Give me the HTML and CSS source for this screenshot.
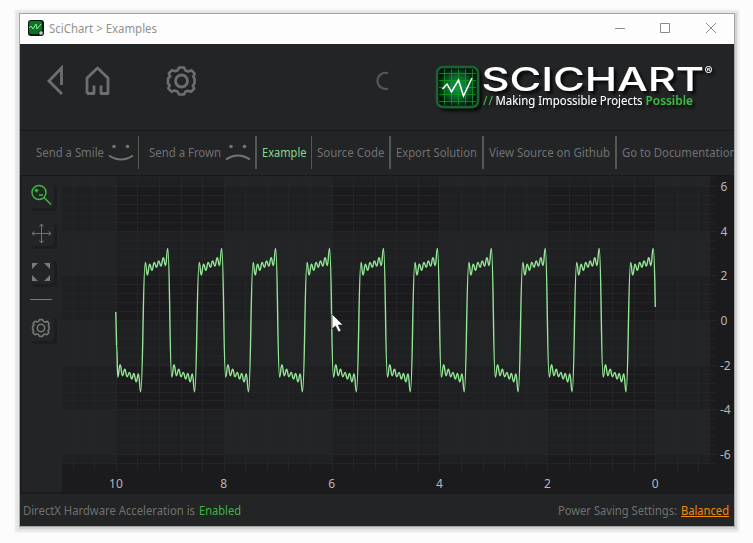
FILE: index.html
```html
<!DOCTYPE html>
<html lang="en">
<head>
<meta charset="utf-8">
<title>SciChart &gt; Examples</title>
<link rel="stylesheet" href="styles.css">
</head>
<body>
<div class="window">
  <div class="titlebar">
    <svg class="app-icon" width="16" height="16" viewBox="0 0 16 16">
      <rect width="16" height="16" rx="3" fill="#071b0d"/>
      <rect x="1" y="1" width="13" height="13" rx="2" fill="#087526"/>
      <path d="M1 8l2-2 2 3 3-5 1 5 4-5" fill="none" stroke="#9ce6a5"/>
      <circle cx="13" cy="13" r="2.3" fill="#ccc" stroke="#222"/>
    </svg>
    <svg class="title" width="112" height="18"><text x="0" y="13" textLength="108" lengthAdjust="spacingAndGlyphs">SciChart &gt; Examples</text></svg>
    <svg class="controls" width="110" height="16" viewBox="0 0 110 16">
      <path d="M0 8.500h10M45.500 3.500h9v9h-9zM91 3l10 10M101 3l-10 10" fill="none" stroke="#8a8a8a"/>
    </svg>
  </div>

  <header class="header">
    <svg class="nav" width="160" height="34" viewBox="0 0 160 34">
      <g fill="none" stroke="#6d6f6f" stroke-width="2.800">
        <path d="M15 31L2 18 14.500 5v17"/>
        <path d="M40 30.500V15L50.500 5 61 15v15.500h-7v-8M47 22.500v8h-7" stroke-linejoin="round"/>
        <g transform="translate(134.500 18)">
          <path id="gear" stroke-width="2.600" stroke-linejoin="round" d="M-2.500-13.500h5l1.500 3 3 1 3-1.200 3.200 3.400-1.400 3.100L13-2.500v5l-1.700 2 1.400 3L9.500 10.800l-3.200-1-2.500 1L2.500 13.500h-5l-1.500-3-3-1-3 1.200-3.200-3.400 1.400-3.100L-13.500 2.500v-5l2.200-2-1.400-3 3.200-3.300 3.200 1 2.500-1z"/>
          <circle r="6"/>
        </g>
      </g>
    </svg>
    <svg class="spinner" width="14" height="20" viewBox="0 0 14 20"><path d="M12 2.300A8 8 0 1 0 12 17.500" fill="none" stroke="#565959" stroke-width="2"/></svg>
    <svg class="logo" width="288" height="60" viewBox="432 60 288 60">
      <defs>
        <radialGradient id="glow"><stop stop-color="#16a04c"/><stop offset=".55" stop-color="#0a652c"/><stop offset="1" stop-color="#021408"/></radialGradient>
        <filter id="shade" x="-10%" y="-20%" width="125%" height="150%"><feDropShadow dx="3" dy="3" stdDeviation="1.500" flood-color="#000" flood-opacity=".75"/></filter>
      </defs>
      <g filter="url(#shade)">
        <rect x="437" y="67" width="41" height="40" rx="6" fill="url(#glow)" stroke="#1b6236" stroke-width="2.500"/>
        <path d="M444.500 69v36M451.500 69v36M458.500 69v36M465.500 69v36M472.500 69v36M439 73.500h37M439 80.500h37M439 87.500h37M439 94.500h37M439 101.500h37" stroke="#0a9b20" stroke-width=".8"/>
        <path d="M442.500 89l4.500-5 4.500 8 7-12 5 16 8.500-18" fill="none" stroke="#fff" stroke-width="1.500"/>
        <text class="brand" x="481.500" y="90.700" textLength="222.500" lengthAdjust="spacingAndGlyphs">SCICHART</text>
        <text class="reg" x="704.500" y="75">®</text>
        <text class="tag slashes" x="483" y="105" textLength="10">//</text>
        <text class="tag" x="495.500" y="105" textLength="147" lengthAdjust="spacingAndGlyphs">Making Impossible Projects</text>
        <text class="tag possible" x="645.500" y="105" textLength="47.500" lengthAdjust="spacingAndGlyphs">Possible</text>
      </g>
    </svg>
  </header>

  <nav class="tabs">
    <div class="tab smile"><svg width="69" height="20"><text x="0" y="13" textLength="68" lengthAdjust="spacingAndGlyphs">Send a Smile</text></svg>
      <svg class="face" width="26" height="18" viewBox="0 0 26 18"><circle cx="6" cy="2.500" r="1.800"/><circle cx="19.500" cy="2.500" r="1.800"/><path d="M1 11.500q12 8 24 0"/></svg></div>
    <div class="tab frown"><svg width="73" height="20"><text x="0" y="13" textLength="72" lengthAdjust="spacingAndGlyphs">Send a Frown</text></svg>
      <svg class="face" width="26" height="18" viewBox="0 0 26 18"><circle cx="6" cy="2.500" r="1.800"/><circle cx="19.500" cy="2.500" r="1.800"/><path d="M1 15.500q12-8 24 0"/></svg></div>
    <div class="tab example"><svg width="46" height="20"><text x="0" y="13" textLength="44.500" lengthAdjust="spacingAndGlyphs">Example</text></svg></div>
    <div class="tab source"><svg width="69" height="20"><text x="0" y="13" textLength="67.500" lengthAdjust="spacingAndGlyphs">Source Code</text></svg></div>
    <div class="tab export"><svg width="82" height="20"><text x="0" y="13" textLength="81" lengthAdjust="spacingAndGlyphs">Export Solution</text></svg></div>
    <div class="tab github"><svg width="122" height="20"><text x="0" y="13" textLength="121" lengthAdjust="spacingAndGlyphs">View Source on Github</text></svg></div>
    <div class="tab docs"><svg width="120" height="20"><text x="0" y="13" textLength="114.500" lengthAdjust="spacingAndGlyphs">Go to Documentation</text></svg></div>
  </nav>

  <main class="main">
    <aside class="tools">
      <div class="tool"><svg width="24" height="24" viewBox="0 0 24 24" fill="none" stroke="#3fb544" stroke-width="1.500"><circle cx="9" cy="8.500" r="7"/><path d="M14 13.500l7 7M4.500 6.500h4M6.500 4.500v4M9 11h4"/></svg></div>
      <div class="tool"><svg width="24" height="24" viewBox="0 0 24 24" fill="none" stroke="#707270"><path d="M2 11.500h19M11.500 2v19M9.500 4.500l2-2.500 2 2.500M9.500 18.500l2 2.500 2-2.500M4.500 9.500L2 11.500l2.500 2M18.500 9.500l2.500 2-2.500 2"/></svg></div>
      <div class="tool"><svg width="24" height="24" viewBox="0 0 24 24" fill="#7a7c7a"><path d="M2 3h6L2 9zM20 3v6l-6-6zM2 21v-6l6 6zM20 21h-6l6-6z"/></svg></div>
      <div class="rule"></div>
      <div class="tool"><svg width="24" height="24" viewBox="0 0 24 24" fill="none" stroke="#747774"><g transform="translate(11 11)"><use href="#gear" transform="scale(.62)"/><circle r="3.700" stroke-width="1.500"/></g></svg></div>
    </aside>
    <svg id="chart" class="chart" width="672" height="317" viewBox="62 176 672 317"></svg>
  </main>

  <footer class="footer">
    <svg width="220" height="20"><text x="0" y="14" textLength="172" lengthAdjust="spacingAndGlyphs">DirectX Hardware Acceleration is</text><text class="enabled" x="176" y="14" textLength="42" lengthAdjust="spacingAndGlyphs">Enabled</text></svg>
    <svg width="172" height="20"><text x="0" y="14" textLength="119" lengthAdjust="spacingAndGlyphs">Power Saving Settings:</text><text class="balanced" x="123" y="14" textLength="48" lengthAdjust="spacingAndGlyphs">Balanced</text><path d="M123 15.500h48" stroke="#f58a07"/></svg>
  </footer>
</div>
<svg class="cursor" width="14" height="21" viewBox="0 0 14 21"><path d="M1 1v15l3.500-3 3 6 2.500-1.200-2.700-5.800H12z" fill="#fff" stroke="#222" stroke-width=".7"/></svg>
<script src="chart.js"></script>
</body>
</html>
```
FILE: styles.css
```css
* { box-sizing: border-box; }
body {
  margin: 0;
  width: 753px;
  height: 543px;
  overflow: hidden;
  background: #fcfcfc;
  padding: 13px 0 0 19px;
  font: 12px "Noto Sans", "Open Sans", sans-serif;
}
svg { display: block; flex: none; overflow: visible; }
text { fill: #6f7171; font-size: 12px; }
.window {
  width: 716px;
  height: 514px;
  border: 1px solid #a5a5a5;
  background: #1b1b1d;
  box-shadow: 1px 1px 0 1px #d2d2d2, 0 1px 2px 4px #e6e6e6;
}
.titlebar {
  height: 30px;
  background: #fdfdfd;
  display: flex;
  align-items: center;
  padding-left: 8px;
}
.app-icon { margin-top: -2px; }
.title { margin-left: 5px; }
.title text { fill: #929292; }
.controls { margin-left: 454px; margin-top: -2px; }
.header {
  height: 86px;
  background: #232426;
  display: flex;
}
.nav { margin: 18.500px 0 0 27px; }
.spinner { margin: 27px 0 0 169px; }
.logo { margin: 16px 0 0 42px; }
.brand { font-family: Inter, sans-serif; font-weight: 500; font-size: 32.600px; fill: #fff; }
.reg { font-family: Inter, sans-serif; font-size: 12px; fill: #fff; }
.tag { font-size: 12px; fill: #fff; }
.slashes { fill: #3db845; }
.possible { font-weight: 600; fill: #3db845; }
.tabs {
  height: 46px;
  border-top: 1px solid #18191a;
  border-bottom: 1px solid #18191a;
  background: #232426;
  display: flex;
  padding-top: 5px;
  overflow: hidden;
}
.tab {
  height: 33px;
  display: flex;
  align-items: center;
  flex: none;
  border-right: 2px solid #515a53;
}
.tab > svg:first-child { margin-top: 2px; }
.smile { width: 119px; padding-left: 16px; border-right-width: 1px; }
.frown { width: 118px; padding-left: 10px; }
.example { width: 55px; padding-left: 5px; border-right-width: 1px; }
.source { width: 79px; padding-left: 5px; }
.export { width: 93px; padding-left: 5px; }
.github { width: 133px; padding-left: 5px; }
.docs { width: 117px; padding-left: 5px; border: 0; overflow: hidden; }
.example text { fill: #85d889; }
.face { margin-left: 3px; fill: #737573; }
.face path { fill: none; stroke: #737573; stroke-width: 2; }
.main { height: 318px; display: flex; padding-left: 2px; }
.tools {
  width: 40px;
  height: 316px;
  background: #232426;
  padding: 8px 0 0 8px;
}
.tool {
  width: 24px;
  height: 24px;
  margin-bottom: 14px;
  border-radius: 3px;
  box-shadow: 2px 2px 0 1px #1c1d1e;
  background: #232426;
}
.tools .tool:nth-child(3) { margin-bottom: 15px; }
.rule { width: 22px; height: 1px; background: #777a77; margin: 0 0 17px; }
.chart text { fill: #b7b7b7; }
.footer {
  height: 32px;
  background: #232426;
  display: flex;
  justify-content: space-between;
  padding: 7px 4px 0 3px;
}
.footer .enabled { fill: #3fb544; }
.footer .balanced { fill: #f58a07; }
.cursor { position: absolute; left: 330.500px; top: 313px; }
```
FILE: chart.js
```js
const parts = [];
const rect = (x, y, w, h, fill) => parts.push(`<rect x="${x}" y="${y}" width="${w}" height="${h}" fill="${fill}"/>`);
const yPos = v => 320 - v * 22.35;
const xPos = v => 655.2 - v * 53.93;

// plot background and alternating bands
rect(62, 176, 648, 288, '#232426');
for (const v of [6, 2, -2]) rect(62, Math.round(yPos(v)), 648, 45, '#1f2022');
rect(62, 454, 648, 10, '#1f2022');
for (const v of [10, 6, 2]) {
  const x = Math.round(xPos(v));
  rect(x, 176, 108, 288, '#1f2022');
  for (const w of [6, 2, -2]) rect(x, Math.round(yPos(w)), 108, 45, '#1b1b1d');
  rect(x, 454, 108, 10, '#1b1b1d');
}

// gridlines run on into the axes as tick marks
for (let i = -2; i <= 27; i++) {
  const x = Math.round(xPos(i * 0.4));
  if (x > 62 && x < 710) rect(x, 176, 1, i % 5 === 0 ? 296 : 294, '#242527');
}
for (let i = -16; i <= 16; i++) {
  const y = Math.round(yPos(i * 0.4));
  if (y > 176 && y < 465) rect(62, y, i % 5 === 0 ? 655 : 653, 1, '#242527');
}

// one period as local extrema: offset from the period start, y
const wave = [[2, 377], [4.3, 364.7], [6.7, 375.7], [9, 369.3], [11.3, 376.7], [13.6, 372.5], [16, 379], [18, 373.5], [20.4, 381.7], [22.6, 374], [24.9, 391.7],
  [29.5, 262.5], [31.5, 275], [33.9, 264.3], [36.2, 270.2], [38.5, 262.5], [40.7, 267.3], [42.9, 261], [45.2, 266], [47.5, 257.8], [49.7, 265.5], [52, 248.5]];
let d = 'M115.8 312L116.6 345';
let px = 116.6, py = 345;
for (let p = 0; p < 10; p++) {
  for (const [dx, y] of wave) {
    const x = 115.8 + p * 53.93 + dx;
    const m = (px + x) / 2;
    d += `C${m.toFixed(2)} ${py} ${m.toFixed(2)} ${y} ${x.toFixed(2)} ${y}`;
    px = x;
    py = y;
  }
}
d += 'C654.4 248.5 654.8 280 655.3 307';
parts.push(`<path d="${d}" fill="none" stroke="#94e596" stroke-width="1.4"/>`);

for (const v of [6, 4, 2, 0, -2, -4, -6]) parts.push(`<text x="${v < 0 ? 720 : 720.5}" y="${yPos(v) + 5}">${v}</text>`);
for (const v of [10, 8, 6, 4, 2, 0]) parts.push(`<text x="${xPos(v)}" y="488" text-anchor="middle">${v}</text>`);
document.getElementById('chart').innerHTML = parts.join('');
```
